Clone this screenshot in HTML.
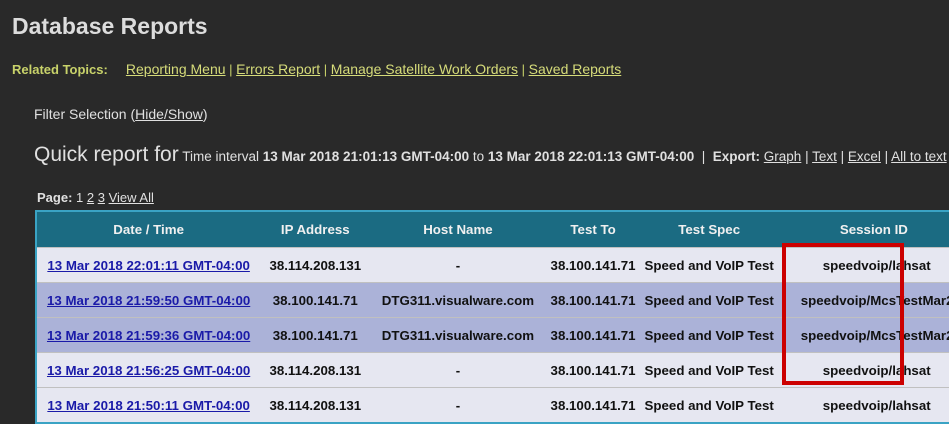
<!DOCTYPE html>
<html><head><meta charset="utf-8"><style>
body{margin:0;width:949px;height:400px;overflow:hidden;background:#292929;font-family:"Liberation Sans",sans-serif;color:#e0e0e0;position:relative}
.a{position:absolute;white-space:nowrap}
h1{position:absolute;left:12px;top:13px;margin:0;font-size:23px;font-weight:bold;color:#dcdcdc}
.rel{left:12px;top:61px;font-size:13px;color:#c8d26a}
.rel a{color:#d6dc7a;text-decoration:underline;font-size:14px}
u{text-decoration:underline}
table{position:absolute;left:35px;top:210px;border-collapse:collapse;border:2px solid #3aa3c4;border-right:none;width:935px;font-size:13.3px;font-weight:bold;color:#111;table-layout:fixed}
th{background:#1b6b82;color:#f0f0f0;height:35px;padding:0;text-align:center}
td{height:34px;padding:0;text-align:center;border-top:1px solid #c0c0c0;white-space:nowrap;overflow:hidden}
tr.l td{background:#e6e7f1}
tr.d td{background:#abb2d8}
td a{color:#1a1aa8;text-decoration:underline}
td.s{text-align:left;padding-left:45px}
td.m{text-align:left;padding-left:23px}
.box{position:absolute;left:782px;top:243px;width:114px;height:134px;border:4px solid #cc0000}
</style></head><body>
<h1>Database Reports</h1>
<div class="a rel"><b>Related Topics:</b>&nbsp;&nbsp;&nbsp;&nbsp; <a>Reporting Menu</a> | <a>Errors Report</a> | <a>Manage Satellite Work Orders</a> | <a>Saved Reports</a></div>
<div class="a" style="left:34px;top:106px;font-size:14px">Filter Selection (<u>Hide/Show</u>)</div>
<div class="a" style="left:34px;top:143px;font-size:13.5px"><span style="font-size:21px">Quick report for</span> Time interval <b>13 Mar 2018 21:01:13 GMT-04:00</b> to <b>13 Mar 2018 22:01:13 GMT-04:00</b> &nbsp;| &nbsp;<b>Export:</b> <u>Graph</u> | <u>Text</u> | <u>Excel</u> | <u>All to text</u></div>
<div class="a" style="left:37px;top:190px;font-size:13px"><b>Page:</b> 1 <u>2</u> <u>3</u> <u>View All</u></div>
<table>
<colgroup><col style="width:224px"><col style="width:110px"><col style="width:175px"><col style="width:95px"><col style="width:137px"><col style="width:192px"></colgroup>
<tr><th>Date / Time</th><th>IP Address</th><th>Host Name</th><th>Test To</th><th>Test Spec</th><th>Session ID</th></tr>
<tr class="l"><td><a>13 Mar 2018 22:01:11 GMT-04:00</a></td><td>38.114.208.131</td><td>-</td><td>38.100.141.71</td><td>Speed and VoIP Test</td><td class="s">speedvoip/lahsat</td></tr>
<tr class="d"><td><a>13 Mar 2018 21:59:50 GMT-04:00</a></td><td>38.100.141.71</td><td>DTG311.visualware.com</td><td>38.100.141.71</td><td>Speed and VoIP Test</td><td class="m">speedvoip/McsTestMar2018</td></tr>
<tr class="d"><td><a>13 Mar 2018 21:59:36 GMT-04:00</a></td><td>38.100.141.71</td><td>DTG311.visualware.com</td><td>38.100.141.71</td><td>Speed and VoIP Test</td><td class="m">speedvoip/McsTestMar2018</td></tr>
<tr class="l"><td><a>13 Mar 2018 21:56:25 GMT-04:00</a></td><td>38.114.208.131</td><td>-</td><td>38.100.141.71</td><td>Speed and VoIP Test</td><td class="s">speedvoip/lahsat</td></tr>
<tr class="l"><td><a>13 Mar 2018 21:50:11 GMT-04:00</a></td><td>38.114.208.131</td><td>-</td><td>38.100.141.71</td><td>Speed and VoIP Test</td><td class="s">speedvoip/lahsat</td></tr>
</table>
<div class="box"></div>
</body></html>
